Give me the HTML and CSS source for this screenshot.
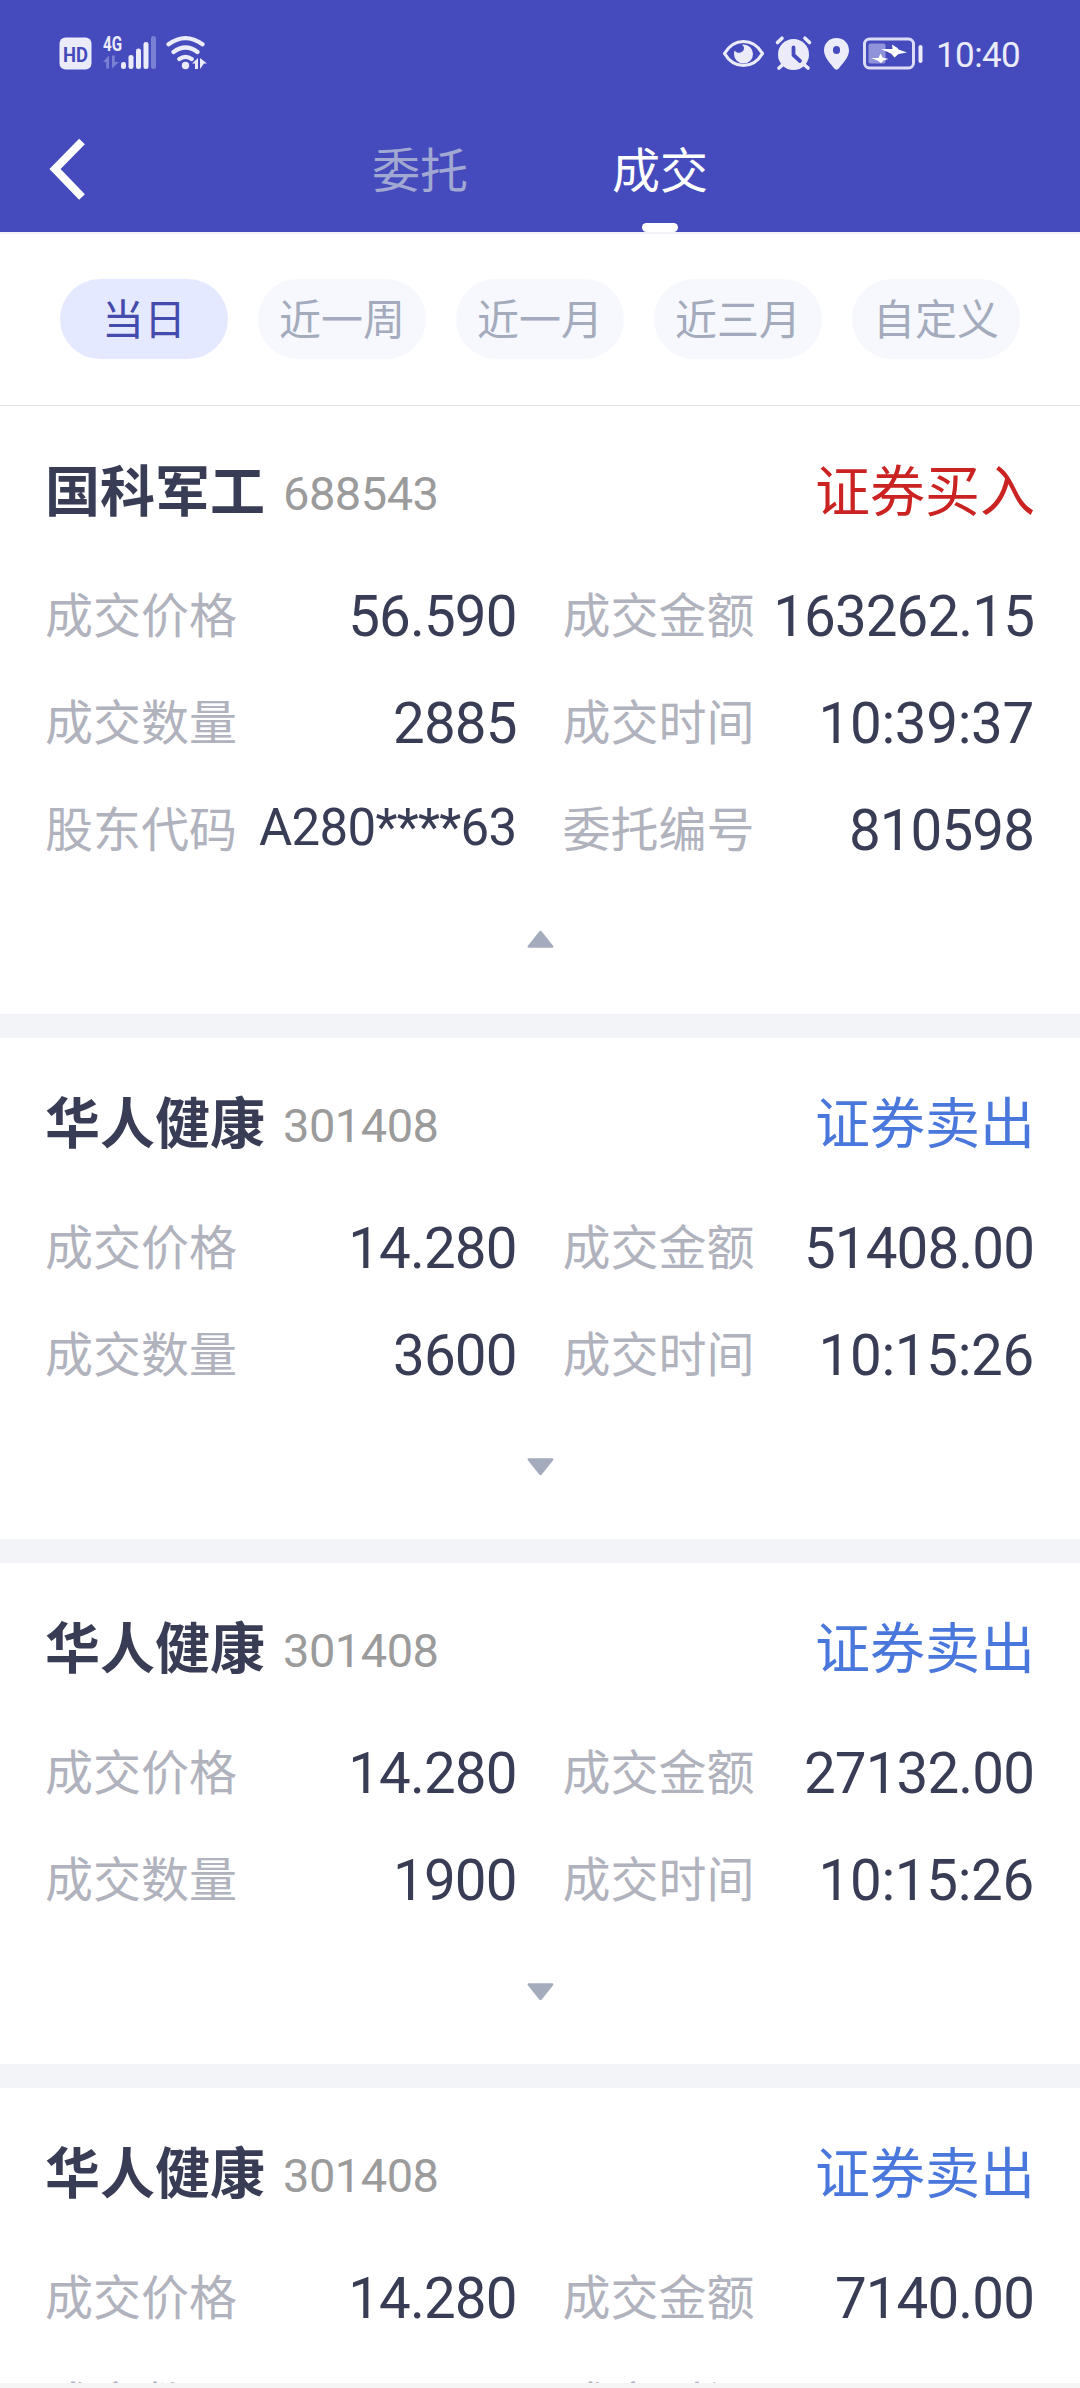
FILE: index.html
```html
<!DOCTYPE html>
<html lang="zh-CN">
<head>
<meta charset="utf-8">
<title>成交</title>
<link rel="stylesheet" href="styles.css">
</head>
<body>
<header class="top">
  <div class="status">
    <svg class="status-left" width="150" height="36" viewBox="0 0 150 36">
      <rect x="1.5" y="2.5" width="32" height="32" rx="6" fill="#ecebfa"/>
      <text class="hd" x="17.6" y="26.5" text-anchor="middle" textLength="25" lengthAdjust="spacingAndGlyphs">HD</text>
      <text class="net" x="45" y="15.5" textLength="19" lengthAdjust="spacingAndGlyphs">4G</text>
      <g fill="#7a80d3">
        <path d="M45 27l6-6.500v13h-2.800v-6.500zM54 20.500h2.800v6.500h4.200l-7 6.500z"/>
        <rect x="93" y="1" width="5" height="33" rx="2.500"/>
      </g>
      <g fill="#ecebfa">
        <rect x="63" y="27" width="5" height="7" rx="2.300"/>
        <rect x="70.500" y="20" width="5" height="14" rx="2.300"/>
        <rect x="78" y="13.500" width="5" height="20.500" rx="2.300"/>
        <rect x="85.500" y="7" width="5" height="27" rx="2.300"/>
        <circle cx="127.500" cy="30.500" r="3.700"/>
        <path d="M134 28.500l6-5.500v11h-3v-5.500zM142 23l7 5.500h-3l-4 5.500z"/>
      </g>
      <g fill="none" stroke="#ecebfa" stroke-width="4.200" stroke-linecap="round">
        <path d="M110.500 9.300q17-12.500 34 0M115.500 17q12-9 24 0M121.300 24q6.200-4.400 12.400 0"/>
      </g>
    </svg>
    <div class="status-right">
      <svg width="202" height="36" viewBox="0 0 202 36">
        <path d="M3.500 18.500C13 2.500 32 2.500 41.500 18.500C32 34.500 13 34.500 3.500 18.500z" fill="none" stroke="#ecebfa" stroke-width="3.200" stroke-linejoin="round"/>
        <path d="M22.500 9.500a9.500 9.500 0 1 1-9.500 9.500c0-1.300.2-2.400.7-3.500c2.500 4 9 2.500 9.300-2.200c.1-1.800-.9-2.800-2-3.600z" fill="#ecebfa"/>
        <circle cx="72.500" cy="19.500" r="15.500" fill="#ecebfa"/>
        <path d="M56.500 7.500l4.500-4.300M88.500 7.500l-4.500-4.300M62 29.500l-4 3.500M83 29.500l4 3.500" stroke="#ecebfa" stroke-width="3.600" stroke-linecap="round"/>
        <path d="M72.500 12.500v7.500l6.500 6" fill="none" stroke="#454bbd" stroke-width="3.800" stroke-linecap="round" stroke-linejoin="round"/>
        <path d="M115.500 3c7.500 0 12.500 5.500 12.500 12.500c0 7-6.500 13-10.200 18c-1.200 1.500-3.400 1.500-4.600 0C109.500 28.500 103 22.500 103 15.500C103 8.500 108 3 115.500 3z" fill="#ecebfa"/>
        <rect x="112" y="11" width="7" height="8" rx="3.500" fill="#454bbd"/>
        <rect x="143.500" y="4" width="49" height="29" rx="5" fill="none" stroke="#dcdcf7" stroke-width="3"/>
        <rect x="147.500" y="8.500" width="17" height="20" rx="2" fill="#8f93da"/>
        <rect x="197.500" y="10" width="4" height="18" rx="2" fill="#ecebfa"/>
        <path d="M171 9.500l5.500 3.500l1 1.500l8.500 3l-8.500 1.500l-4 3.500l-3.500-4l-10-4.500h11.500zM159.500 18.500l2 4l6 1.500l-5 1.500l-2.500 2.500l-3.500-2.500l-6.500-2.500h7.500z" fill="#fff"/>
      </svg>
      <span class="time">10:40</span>
    </div>
  </div>
  <nav class="nav">
    <svg class="back" width="40" height="64" viewBox="0 0 40 64"><path d="M34 3.500L7 31L34 59" fill="none" stroke="#fff" stroke-width="8"/></svg>
    <div class="tab">委托</div>
    <div class="tab tab-on">成交</div>
  </nav>
</header>
<div class="filters">
  <span class="chip chip-on">当日</span>
  <span class="chip">近一周</span>
  <span class="chip">近一月</span>
  <span class="chip">近三月</span>
  <span class="chip">自定义</span>
</div>
<main class="list">
  <section class="card">
    <div class="head"><b class="name">国科军工</b><span class="code">688543</span><span class="side buy">证券买入</span></div>
    <div class="grid">
      <div class="cell"><span>成交价格</span><em>56.590</em></div>
      <div class="cell"><span>成交金额</span><em>163262.15</em></div>
      <div class="cell"><span>成交数量</span><em>2885</em></div>
      <div class="cell"><span>成交时间</span><em class="clock">10:39:37</em></div>
      <div class="cell"><span>股东代码</span><em class="account">A280****63</em></div>
      <div class="cell"><span>委托编号</span><em>810598</em></div>
    </div>
    <div class="toggle toggle-open"><svg class="tri tri-up" width="27" height="18" viewBox="0 0 28 18"><path d="M1.500 0h25q1.500.5.800 1.700L15.300 16.900q-1.300 1.300-2.600 0L.7 1.700Q0 .5 1.500 0z"/></svg></div>
  </section>
  <section class="card">
    <div class="head"><b class="name">华人健康</b><span class="code">301408</span><span class="side sell">证券卖出</span></div>
    <div class="grid">
      <div class="cell"><span>成交价格</span><em>14.280</em></div>
      <div class="cell"><span>成交金额</span><em>51408.00</em></div>
      <div class="cell"><span>成交数量</span><em>3600</em></div>
      <div class="cell"><span>成交时间</span><em class="clock">10:15:26</em></div>
    </div>
    <div class="toggle"><svg class="tri" width="27" height="18" viewBox="0 0 28 18"><path d="M1.500 0h25q1.500.5.800 1.700L15.300 16.900q-1.300 1.300-2.600 0L.7 1.700Q0 .5 1.500 0z"/></svg></div>
  </section>
  <section class="card">
    <div class="head"><b class="name">华人健康</b><span class="code">301408</span><span class="side sell">证券卖出</span></div>
    <div class="grid">
      <div class="cell"><span>成交价格</span><em>14.280</em></div>
      <div class="cell"><span>成交金额</span><em>27132.00</em></div>
      <div class="cell"><span>成交数量</span><em>1900</em></div>
      <div class="cell"><span>成交时间</span><em class="clock">10:15:26</em></div>
    </div>
    <div class="toggle"><svg class="tri" width="27" height="18" viewBox="0 0 28 18"><path d="M1.500 0h25q1.500.5.800 1.700L15.300 16.900q-1.300 1.300-2.600 0L.7 1.700Q0 .5 1.500 0z"/></svg></div>
  </section>
  <section class="card">
    <div class="head"><b class="name">华人健康</b><span class="code">301408</span><span class="side sell">证券卖出</span></div>
    <div class="grid">
      <div class="cell"><span>成交价格</span><em>14.280</em></div>
      <div class="cell"><span>成交金额</span><em>7140.00</em></div>
      <div class="cell"><span>成交数量</span></div>
      <div class="cell"><span>成交时间</span></div>
    </div>
  </section>
</main>
</body>
</html>
```
FILE: styles.css
```css
* { box-sizing: border-box; }
body {
  margin: 0;
  width: 1080px;
  height: 2388px;
  overflow: hidden;
  display: flex;
  flex-direction: column;
  background: #f5f5f5;
  font-family: Roboto, "Noto Sans CJK SC", sans-serif;
  color: #383d55;
}
.top { flex: none; height: 232px; background: #454bbd; }
.status {
  height: 106px;
  padding: 35px 60px 0 58px;
  display: flex;
  justify-content: space-between;
  align-items: flex-start;
}
.hd { font: 700 21px Roboto, sans-serif; fill: #454bbd; }
.net { font: 700 20px Roboto, sans-serif; fill: #ecebfa; }
.status-right { display: flex; gap: 13px; }
.time { width: 84px; font-size: 35px; line-height: 41px; color: #ecebfa; letter-spacing: -0.6px; text-align: right; }
.nav { height: 126px; padding-left: 48px; display: flex; }
.back { flex: none; margin: 32px 212px 0 0; }
.tab {
  width: 240px;
  display: flex;
  flex-direction: column;
  align-items: center;
  justify-content: space-between;
  padding-top: 31px;
  font-size: 48px;
  line-height: 70px;
  color: #a1a8d2;
}
.tab-on { color: #fff; }
.tab-on::after { content: ""; width: 36px; height: 9px; border-radius: 4.500px; background: #fff; }
.filters {
  flex: none;
  height: 174px;
  padding: 45px 60px 0;
  display: flex;
  justify-content: space-between;
  background: #fff;
  border-top: 2px solid #f3f3f7;
  border-bottom: 1px solid #e2e3e5;
}
.chip {
  width: 168px;
  height: 80px;
  border-radius: 40px;
  background: #f6f8fd;
  color: #a3abbd;
  font-size: 42px;
  line-height: 84px;
  text-align: center;
}
.chip-on { background: #e5e9ff; color: #454bac; }
.list {
  flex: none;
  height: 1977px;
  overflow: hidden;
  display: flex;
  flex-direction: column;
  gap: 24px;
  background: #f3f4f7;
}
.card { flex: none; padding: 30px 45px 0; background: #fff; }
.head { height: 124px; display: flex; line-height: 112px; }
.name { font-size: 55px; font-weight: 700; }
.code { margin-left: 18px; padding-top: 2px; font-size: 47px; letter-spacing: -0.5px; color: #9b9b9b; }
.side { margin-left: auto; font-size: 55px; }
.buy { color: #cb2222; }
.sell { color: #4a77dc; }
.grid { display: grid; grid-template-columns: 1fr 1fr; column-gap: 45px; grid-auto-rows: 107px; }
.cell { display: flex; justify-content: space-between; line-height: 107px; font-size: 48px; color: #b0b2bd; }
.cell span { padding-top: 3px; }
.cell em { font-style: normal; font-size: 56.500px; letter-spacing: -0.9px; color: #383d55; padding: 4px 1px 0 0; }
.cell .clock { letter-spacing: -0.3px; }
.cell .account { font-size: 51px; letter-spacing: -0.7px; padding-top: 0; }
.toggle { height: 133px; display: flex; justify-content: center; padding-top: 52px; }
.toggle-open { padding-top: 49px; }
.tri { fill: #a3abbd; }
.tri-up { transform: rotate(180deg); }
```
